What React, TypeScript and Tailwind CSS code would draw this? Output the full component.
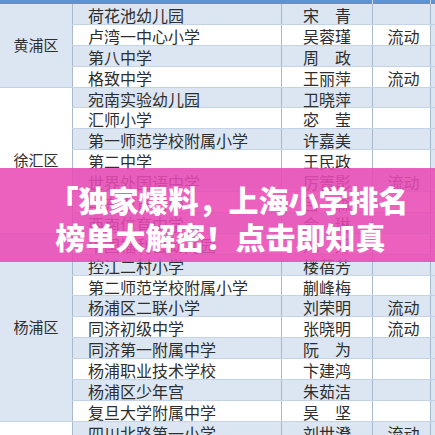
import React from "react";

type Row = { school: string; name: string; flow?: boolean };

interface Block {
  district: string;
  rows: Row[];
}

const blocks: Block[] = [
  {
    district: "黄浦区",
    rows: [
      { school: "荷花池幼儿园", name: "宋　青" },
      { school: "卢湾一中心小学", name: "吴蓉瑾", flow: true },
      { school: "第八中学", name: "周　政" },
      { school: "格致中学", name: "王丽萍", flow: true },
    ],
  },
  {
    district: "徐汇区",
    rows: [
      { school: "宛南实验幼儿园", name: "卫晓萍" },
      { school: "汇师小学", name: "宓　莹" },
      { school: "第一师范学校附属小学", name: "许嘉美" },
      { school: "第二中学", name: "王民政" },
      { school: "世界外国语中学", name: "厉箐影", flow: true },
      { school: "华东教育附中", name: "吕　森" },
      { school: "西南位育中学", name: "俞　琳" },
    ],
  },
  {
    district: "杨浦区",
    rows: [
      { school: "中国福利会幼儿园", name: "凡　郑" },
      { school: "控江二村小学", name: "楼蓓芳" },
      { school: "第二师范学校附属小学", name: "蒯峰梅" },
      { school: "杨浦区二联小学", name: "刘荣明", flow: true },
      { school: "同济初级中学", name: "张晓明", flow: true },
      { school: "同济第一附属中学", name: "阮　为" },
      { school: "杨浦职业技术学校", name: "卞建鸿" },
      { school: "杨浦区少年宫", name: "朱茹洁" },
      { school: "复旦大学附属中学", name: "吴　坚" },
    ],
  },
  {
    district: "",
    rows: [{ school: "四川北路第一小学", name: "刘世澄", flow: true }],
  },
];

const blockColors = ["bg-[#dce6f2]", "bg-white", "bg-[#dce6f2]", "bg-white"];

const App = () => {
  let index = 0;
  return (
    <div
      className="relative w-[435px] h-[435px] overflow-hidden bg-white text-[#2e2e2e]"
      style={{ fontFamily: '"Noto Sans CJK SC", "Noto Sans", sans-serif' }}
    >
      <div className="h-[4px] bg-[#5d92d3] flex">
        <div className="w-[372px]" />
        <div className="w-[58px] border-l border-[#c9daf0]" />
        <div className="flex-1 border-l border-[#c9daf0]" />
      </div>

      {blocks.map((block, b) => (
        <div key={b} className="flex">
          <div
            className={`w-[72px] shrink-0 flex items-center justify-center text-[15px] border-b border-[#c3d3e8] ${blockColors[b]}`}
          >
            {block.district}
          </div>
          <div className="flex-1">
            {block.rows.map((row) => {
              const blue = index % 2 === 0;
              index++;
              return (
                <div
                  key={row.school}
                  className={`h-[20.9px] flex border-b border-[#c3d3e8] text-[16px] leading-none ${
                    blue ? "bg-[#dce6f2]" : "bg-white"
                  }`}
                >
                  <div className="w-[209px] border-l border-[#a9b9cc] pl-[15px] flex items-center pt-[2px]">
                    {row.school}
                  </div>
                  <div className="w-[91px] border-l border-[#a9b9cc] flex items-center justify-center pt-[2px]">
                    {row.name}
                  </div>
                  <div className="w-[58px] border-l border-[#a9b9cc] flex items-center justify-center pt-[2px] pl-[4px]">
                    {row.flow ? "流动" : ""}
                  </div>
                  <div className="flex-1 border-l border-[#a9b9cc] bg-[#dce6f2]" />
                </div>
              );
            })}
          </div>
        </div>
      ))}

      <div className="absolute left-0 top-[168px] w-full h-[94px] bg-[#e84ab3]/[0.87] pt-[13px] text-white font-black text-[30px] leading-[37px] text-center">
        <p className="pl-[22px]">「独家爆料，上海小学排名</p>
        <p className="pl-[6px]">榜单大解密！点击即知真</p>
      </div>
    </div>
  );
};

export default App;
